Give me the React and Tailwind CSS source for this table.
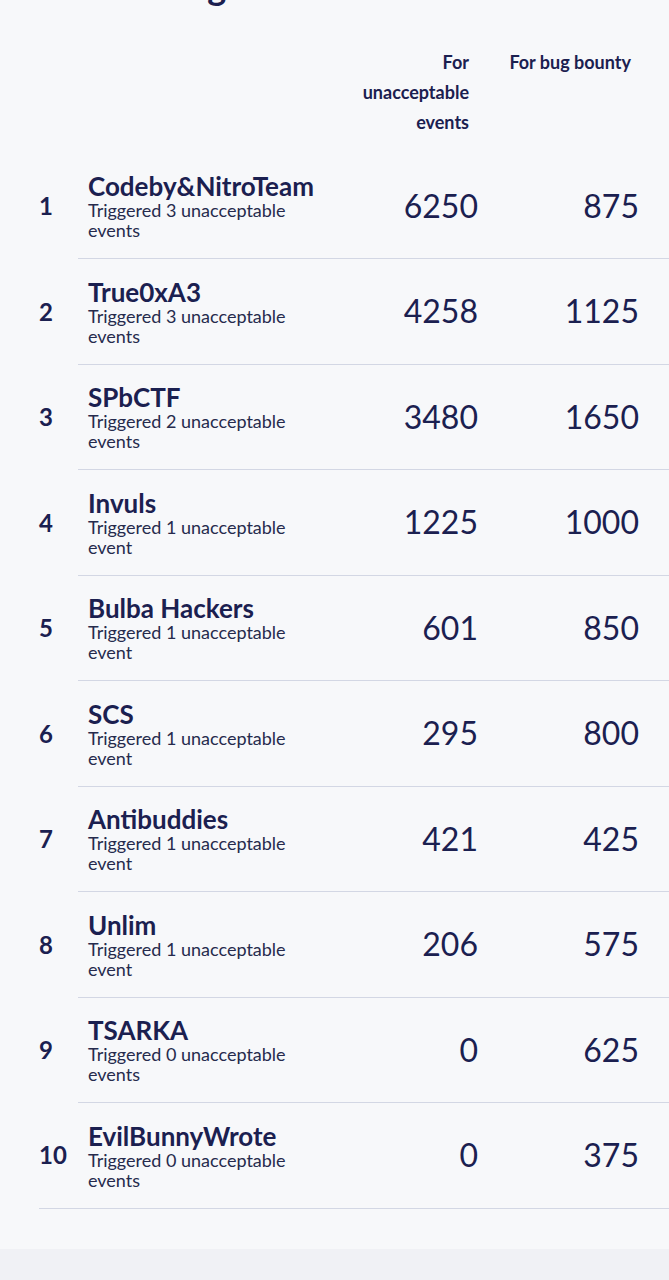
const teams = [
  { rank: 1, name: "Codeby&NitroTeam", events: 3, unacceptable: 6250, bounty: 875 },
  { rank: 2, name: "True0xA3", events: 3, unacceptable: 4258, bounty: 1125 },
  { rank: 3, name: "SPbCTF", events: 2, unacceptable: 3480, bounty: 1650 },
  { rank: 4, name: "Invuls", events: 1, unacceptable: 1225, bounty: 1000 },
  { rank: 5, name: "Bulba Hackers", events: 1, unacceptable: 601, bounty: 850 },
  { rank: 6, name: "SCS", events: 1, unacceptable: 295, bounty: 800 },
  { rank: 7, name: "Antibuddies", events: 1, unacceptable: 421, bounty: 425 },
  { rank: 8, name: "Unlim", events: 1, unacceptable: 206, bounty: 575 },
  { rank: 9, name: "TSARKA", events: 0, unacceptable: 0, bounty: 625 },
  { rank: 10, name: "EvilBunnyWrote", events: 0, unacceptable: 0, bounty: 375 },
];

function Row({ team, last }) {
  return (
    <div className={`flex h-[105.5px] ${last ? "border-b border-[#d3d7e4]" : ""}`}>
      <div className="w-[39px] shrink-0 flex items-center text-[24px] font-bold">{team.rank}</div>
      <div className={`flex-1 flex items-center ${last ? "" : "border-b border-[#d3d7e4]"}`}>
        <div className="w-[242px] pl-[10px] pt-[1px]">
          <div className="text-[26px] font-bold leading-[28px] whitespace-nowrap">{team.name}</div>
          <div className="text-[18px] leading-[20px] text-[#262b4d]">
            Triggered {team.events} unacceptable {team.events === 1 ? "event" : "events"}
          </div>
        </div>
        <div className="w-[158px] text-right text-[32px]">{team.unacceptable}</div>
        <div className="w-[191px] pr-[30px] text-right text-[32px]">{team.bounty}</div>
      </div>
    </div>
  );
}

export default function App() {
  return (
    <div className="min-h-[1280px] bg-[#f0f1f5] font-['Lato',_'Noto_Sans',sans-serif] text-[#1b2050] overflow-hidden">
      <section className="bg-[#f7f8fa] pl-[39px] pb-[40px]">
        {/* Heading, scrolled mostly out of view */}
        <h2 className="-mt-[34px] text-[36px] font-bold leading-[40px]">Team rating</h2>

        {/* Column headers */}
        <div className="flex pt-[41px] h-[147.5px] box-border text-[18px] font-bold leading-[30px]">
          <div className="w-[39px] shrink-0" />
          <div className="w-[242px]" />
          <div className="w-[158px] pr-[9px] flex justify-end">
            <div className="w-[120px] text-right">For unacceptable events</div>
          </div>
          <div className="w-[191px] pr-[38px] text-right whitespace-nowrap">For bug bounty</div>
        </div>

        {teams.map((t, i) => (
          <Row key={t.rank} team={t} last={i === teams.length - 1} />
        ))}
      </section>
    </div>
  );
}
